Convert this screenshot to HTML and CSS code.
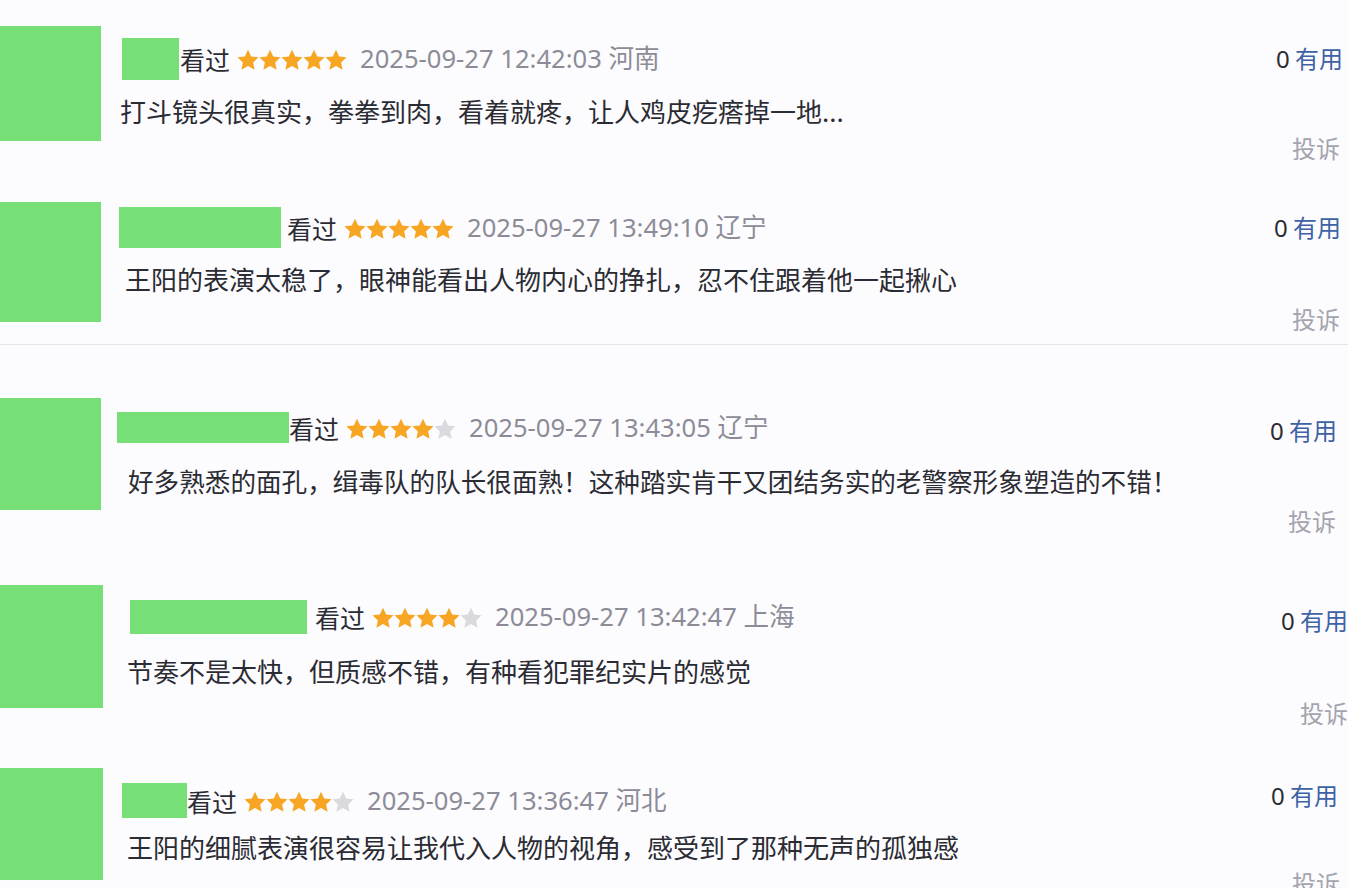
FILE: index.html
```html
<!DOCTYPE html>
<html lang="zh-CN">
<head>
	<meta charset="utf-8">
	<title>短评</title>
	<link rel="stylesheet" href="styles.css">
</head>
<body>
	<svg class="defs" width="0" height="0">
		<symbol id="star" viewBox="0 0 24 24">
			<path d="M12 .8l3.5 7.3 8 1-5.9 5.5 1.6 7.9L12 18.6l-7.2 3.9 1.6-7.9L.5 9.1l8-1z"/>
		</symbol>
	</svg>

	<div class="list">
		<div class="review r1">
			<div class="avatar"></div>
			<div class="main">
				<div class="meta">
					<span class="name"></span>
					<span class="seen">看过</span>
					<span class="stars">
						<svg class="on"><use href="#star"/></svg><svg class="on"><use href="#star"/></svg><svg class="on"><use href="#star"/></svg><svg class="on"><use href="#star"/></svg><svg class="on"><use href="#star"/></svg>
					</span>
					<span class="date">2025-09-27 12:42:03 河南</span>
				</div>
				<p class="text">打斗镜头很真实，拳拳到肉，看着就疼，让人鸡皮疙瘩掉一地...</p>
			</div>
			<div class="side">
				<span class="useful"><b>0</b> 有用</span>
				<span class="report">投诉</span>
			</div>
		</div>

		<div class="review r2">
			<div class="avatar"></div>
			<div class="main">
				<div class="meta">
					<span class="name"></span>
					<span class="seen">看过</span>
					<span class="stars">
						<svg class="on"><use href="#star"/></svg><svg class="on"><use href="#star"/></svg><svg class="on"><use href="#star"/></svg><svg class="on"><use href="#star"/></svg><svg class="on"><use href="#star"/></svg>
					</span>
					<span class="date">2025-09-27 13:49:10 辽宁</span>
				</div>
				<p class="text">王阳的表演太稳了，眼神能看出人物内心的挣扎，忍不住跟着他一起揪心</p>
			</div>
			<div class="side">
				<span class="useful"><b>0</b> 有用</span>
				<span class="report">投诉</span>
			</div>
		</div>

		<div class="review r3">
			<div class="avatar"></div>
			<div class="main">
				<div class="meta">
					<span class="name"></span>
					<span class="seen">看过</span>
					<span class="stars">
						<svg class="on"><use href="#star"/></svg><svg class="on"><use href="#star"/></svg><svg class="on"><use href="#star"/></svg><svg class="on"><use href="#star"/></svg><svg class="off"><use href="#star"/></svg>
					</span>
					<span class="date">2025-09-27 13:43:05 辽宁</span>
				</div>
				<p class="text">好多熟悉的面孔，缉毒队的队长很面熟！这种踏实肯干又团结务实的老警察形象塑造的不错！</p>
			</div>
			<div class="side">
				<span class="useful"><b>0</b> 有用</span>
				<span class="report">投诉</span>
			</div>
		</div>

		<div class="review r4">
			<div class="avatar"></div>
			<div class="main">
				<div class="meta">
					<span class="name"></span>
					<span class="seen">看过</span>
					<span class="stars">
						<svg class="on"><use href="#star"/></svg><svg class="on"><use href="#star"/></svg><svg class="on"><use href="#star"/></svg><svg class="on"><use href="#star"/></svg><svg class="off"><use href="#star"/></svg>
					</span>
					<span class="date">2025-09-27 13:42:47 上海</span>
				</div>
				<p class="text">节奏不是太快，但质感不错，有种看犯罪纪实片的感觉</p>
			</div>
			<div class="side">
				<span class="useful"><b>0</b> 有用</span>
				<span class="report">投诉</span>
			</div>
		</div>

		<div class="review r5">
			<div class="avatar"></div>
			<div class="main">
				<div class="meta">
					<span class="name"></span>
					<span class="seen">看过</span>
					<span class="stars">
						<svg class="on"><use href="#star"/></svg><svg class="on"><use href="#star"/></svg><svg class="on"><use href="#star"/></svg><svg class="on"><use href="#star"/></svg><svg class="off"><use href="#star"/></svg>
					</span>
					<span class="date">2025-09-27 13:36:47 河北</span>
				</div>
				<p class="text">王阳的细腻表演很容易让我代入人物的视角，感受到了那种无声的孤独感</p>
			</div>
			<div class="side">
				<span class="useful"><b>0</b> 有用</span>
				<span class="report">投诉</span>
			</div>
		</div>
	</div>
</body>
</html>
```

FILE: styles.css
```css
body {
	margin: 0;
	background-color: #fcfcfe;
	font-family: "Noto Sans CJK SC", "Noto Sans", sans-serif;
	color: #2b2b33;
	overflow: hidden;
}

.defs {
	position: absolute;
}

.list {
	width: 1348px;
	height: 888px;
}

.review {
	display: flex;
	align-items: flex-start;
	box-sizing: border-box;
	height: var(--h);
	padding-top: var(--top);
	padding-right: var(--right);
}

.avatar {
	flex: none;
	width: var(--av-w);
	height: var(--av-h);
	background-color: #76df76;
}

.main {
	display: flex;
	flex-direction: column;
	padding-top: var(--box-y);
}

.meta {
	display: flex;
	align-items: center;
	height: var(--box-h);
	font-size: 25px;
	line-height: 30px;
}

.name {
	width: var(--box-w);
	height: var(--box-h);
	margin-left: var(--box-x);
	margin-right: var(--seen-gap);
	background-color: #76df76;
}

.seen {
	color: #2b2b33;
}

.stars {
	display: flex;
	gap: 0;
	margin-left: 7px;
	margin-right: 13px;
	padding-top: 2px;
}

.stars svg {
	width: 22px;
	height: 22px;
}

.stars .on {
	fill: #f6a623;
}

.stars .off {
	fill: #d9d9de;
}

.date {
	font-family: "Noto Sans", "Noto Sans CJK SC", sans-serif;
	font-size: 25.6px;
	color: #8c8c98;
	white-space: nowrap;
}

.text {
	margin: var(--text-gap) 0 0 var(--text-x);
	font-size: var(--text-size);
	line-height: 30px;
	white-space: nowrap;
	color: #2b2b33;
}

.side {
	margin-left: auto;
	display: flex;
	flex-direction: column;
	align-items: flex-end;
	padding-top: var(--side-y);
	font-size: 24px;
	line-height: 30px;
}

.useful {
	color: #3e62a6;
	white-space: nowrap;
}

.useful b {
	font-family: "Noto Sans", sans-serif;
	font-weight: normal;
	color: #2b2b33;
}

.report {
	margin-top: var(--report-gap);
	margin-right: var(--report-x);
	color: #a4a4ae;
}

.r1 {
	--h: 170px; --top: 26px; --right: 5px;
	--av-w: 101px; --av-h: 115px;
	--box-x: 21px; --box-y: 12px; --box-w: 57px; --box-h: 42px; --seen-gap: 1px;
	--text-x: 19px; --text-gap: 16px; --text-size: 26px;
	--side-y: 17px; --report-gap: 59px; --report-x: 3px;
}

.r2 {
	--h: 175px; --top: 32px; --right: 7px;
	--av-w: 101px; --av-h: 120px;
	--box-x: 18px; --box-y: 5px; --box-w: 162px; --box-h: 41px; --seen-gap: 6px;
	--text-x: 24px; --text-gap: 16px; --text-size: 26px;
	--side-y: 10px; --report-gap: 61px; --report-x: 1px;
	border-bottom: 1px solid #e6e6ec;
}

.r3 {
	--h: 215px; --top: 53px; --right: 11px;
	--av-w: 101px; --av-h: 112px;
	--box-x: 16px; --box-y: 14px; --box-w: 172px; --box-h: 31px; --seen-gap: 0px;
	--text-x: 27px; --text-gap: 23px; --text-size: 25.6px;
	--side-y: 17px; --report-gap: 60px; --report-x: 1px;
}

.r4 {
	--h: 185px; --top: 25px; --right: 0px;
	--av-w: 103px; --av-h: 123px;
	--box-x: 27px; --box-y: 15px; --box-w: 177px; --box-h: 34px; --seen-gap: 8px;
	--text-x: 24px; --text-gap: 22px; --text-size: 26px;
	--side-y: 20px; --report-gap: 62px; --report-x: 0px;
}

.r5 {
	--h: 143px; --top: 23px; --right: 10px;
	--av-w: 103px; --av-h: 112px;
	--box-x: 19px; --box-y: 15px; --box-w: 65px; --box-h: 35px; --seen-gap: 0px;
	--text-x: 24px; --text-gap: 14px; --text-size: 26px;
	--side-y: 12px; --report-gap: 57px; --report-x: -2px;
}
```
